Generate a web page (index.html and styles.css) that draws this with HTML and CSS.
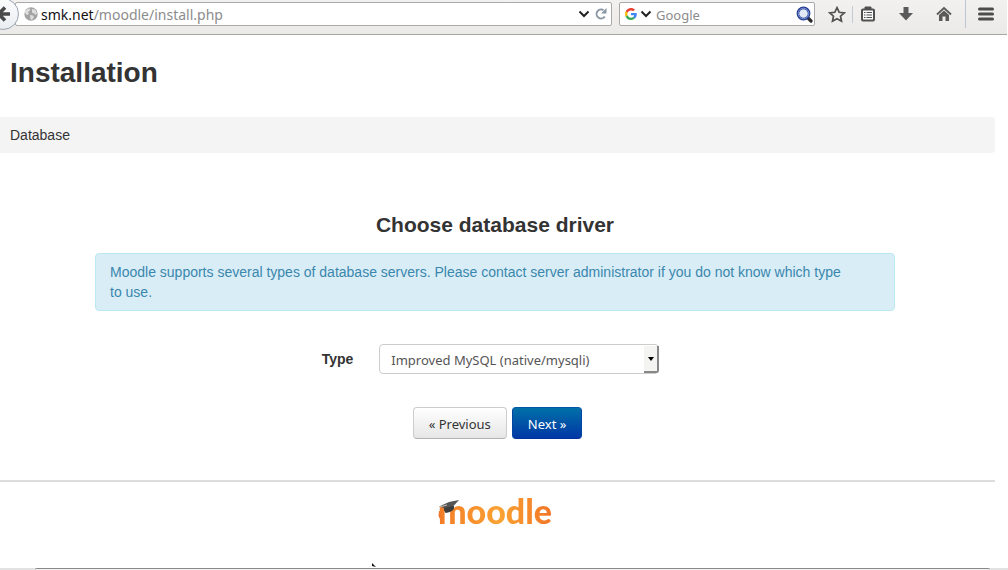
FILE: index.html
```html
<!DOCTYPE html>
<html lang="en">
<head>
  <meta charset="UTF-8">
  <meta name="viewport" content="width=device-width, initial-scale=1.0">
  <title>Installation</title>
  <link rel="stylesheet" href="styles.css">
</head>
<body>
  <header class="toolbar">
    <button class="back" aria-label="Back">
      <svg width="19" height="31" viewBox="0 0 19 31">
        <defs>
          <linearGradient id="backFill" x1="0" y1="0" x2="0" y2="1">
            <stop offset="0" stop-color="#fdfdfd"/>
            <stop offset="1" stop-color="#e9edf2"/>
          </linearGradient>
        </defs>
        <circle cx="3" cy="14" r="15.5" fill="url(#backFill)" stroke="#9aa5b1"/>
        <path d="M10 14H-2M5 7.500L-1.500 14L5 20.500" fill="none" stroke="#4a4a4a" stroke-width="3.600"/>
      </svg>
    </button>
    <div class="url-box">
      <svg class="globe" width="14" height="14" viewBox="0 0 14 14">
        <circle cx="7" cy="7" r="6.700" fill="#a3a3a3"/>
        <path d="M1 4L4 1.500L6.500 2L5.500 4L4 5L5 7L3 8L1 6ZM8 2L11 2.500L13 6L12 8L10 6.500L8 5.500ZM6 8L9 8.500L10 10L8 13L6.500 12Z" fill="#dedede"/>
      </svg>
      <div class="url"><b>smk.net</b>/moodle/install.php</div>
      <button class="plain" aria-label="History">
        <svg width="12" height="8" viewBox="0 0 12 8"><path d="M1.500 1.500L6 6L10.500 1.500" fill="none" stroke="#222" stroke-width="2"/></svg>
      </button>
      <button class="plain reload" aria-label="Reload">
        <svg width="12" height="12" viewBox="0 0 12 12"><path d="M8.500 2.200A4.500 4.500 0 1 0 9.800 8.500" fill="none" stroke="#8996a3" stroke-width="1.900"/><path d="M11.500 0V5.500H6Z" fill="#8996a3"/></svg>
      </button>
    </div>
    <div class="search-box">
      <svg width="12" height="12" viewBox="0 0 48 48">
        <path fill="#ea4335" d="M24 9.500c3.500 0 6.700 1.200 9.200 3.600l6.900-6.900C35.900 2.400 30.500 0 24 0 14.600 0 6.500 5.400 2.600 13.200l8 6.200C12.400 13.700 17.700 9.500 24 9.500z"/>
        <path fill="#4285f4" d="M47 24.500c0-1.600-.2-3.100-.4-4.500H24v9h12.900c-.6 3-2.300 5.500-4.800 7.200l7.700 6C44.400 38 47 32 47 24.500z"/>
        <path fill="#fbbc05" d="M10.500 28.600c-.5-1.500-.8-3-.8-4.600s.3-3.100.8-4.600l-8-6.200C1 16.500 0 20.100 0 24s1 7.500 2.600 10.800z"/>
        <path fill="#34a853" d="M24 48c6.500 0 11.900-2.100 15.900-5.800l-7.700-6c-2.200 1.500-4.900 2.300-8.200 2.300-6.300 0-11.600-4.200-13.500-9.900l-8 6.200C6.500 42.600 14.600 48 24 48z"/>
      </svg>
      <svg class="engine-arrow" width="12" height="8" viewBox="0 0 12 8"><path d="M1.500 1.500L6 6L10.500 1.500" fill="none" stroke="#222" stroke-width="2"/></svg>
      <input class="search" type="text" placeholder="Google" aria-label="Search">
      <button class="plain" aria-label="Search Google">
        <svg width="17" height="17" viewBox="0 0 17 17">
          <path d="M11.500 11.500L15 15" stroke="#292929" stroke-width="3.200" stroke-linecap="round"/>
          <circle cx="7.500" cy="7.500" r="5.600" fill="#e1e9f7" stroke="#263c91" stroke-width="2.600"/>
          <circle cx="7.500" cy="7.500" r="5.300" fill="none" stroke="#7f98da" stroke-width="1"/>
        </svg>
      </button>
    </div>
    <div class="actions">
      <button class="plain bookmark" aria-label="Bookmark this page">
        <svg width="18" height="17" viewBox="0 0 18 17"><path d="M9 1.700L11.200 6.300L16.200 6.900L12.500 10.200L13.500 15.200L9 12.700L4.500 15.200L5.500 10.200L1.800 6.900L6.800 6.300Z" fill="none" stroke="#505050" stroke-width="1.700"/></svg>
      </button>
      <button class="plain bookmarks" aria-label="Bookmarks">
        <svg width="16" height="16" viewBox="0 0 16 16"><path d="M5 3V1H11V3" fill="#505050" stroke="#505050"/><rect x="2" y="3.500" width="12" height="11" rx="1" fill="#fafafa" stroke="#505050" stroke-width="2"/><path d="M4 6.500H5.500M6.500 6.500H12M4 9H5.500M6.500 9H12M4 11.500H5.500M6.500 11.500H12" stroke="#505050" stroke-width="1"/></svg>
      </button>
      <button class="plain" aria-label="Downloads">
        <svg width="16" height="16" viewBox="0 0 16 16"><path d="M5.500 1H10.500V7H15L8 14.500L1 7H5.500Z" fill="#5a5a5a"/></svg>
      </button>
      <button class="plain" aria-label="Home">
        <svg width="16" height="16" viewBox="0 0 16 16"><path d="M1 8.500L8 2L15 8.500" fill="none" stroke="#5a5a5a" stroke-width="1.800"/><path d="M3 9L8 4.500L13 9V15H9.500V10.500H6.500V15H3Z" fill="#5a5a5a"/></svg>
      </button>
      <button class="plain menu" aria-label="Open menu">
        <svg width="16" height="14" viewBox="0 0 16 14"><path d="M1.500 2H14.500M1.500 7H14.500M1.500 12H14.500" stroke="#4c4c4c" stroke-width="3" stroke-linecap="round"/></svg>
      </button>
    </div>
  </header>

  <main class="page">
    <h1>Installation</h1>
    <div class="breadcrumb">Database</div>

    <form class="installer">
      <h2>Choose database driver</h2>
      <div class="alert">Moodle supports several types of database servers. Please contact server administrator if you do not know which type to use.</div>
      <div class="field">
        <label for="dbtype">Type</label>
        <div class="select-wrap">
          <select id="dbtype">
            <option>Improved MySQL (native/mysqli)</option>
          </select>
          <span class="drop"></span>
        </div>
      </div>
      <div class="buttons">
        <button type="button" class="btn">« Previous</button>
        <button type="button" class="btn primary">Next »</button>
      </div>
    </form>

    <footer>
      <a class="logo" href="#">moodle
        <svg class="hat" width="24" height="26" viewBox="0 0 24 26">
          <path d="M6 8L16 6.500V9.500C15 12 11 13.500 7.500 14L6 11Z" fill="#3d3d3d"/>
          <path d="M1 7.500L11 3L21 1L16 6.500L6 9Z" fill="#555"/>
          <path d="M9 6L1.500 8V14" fill="none" stroke="#e7dcd3" stroke-width=".8"/>
          <path d="M1 12L2 12L2.500 21L.5 17Z" fill="#f0742a"/>
        </svg>
      </a>
    </footer>
  </main>

  <div class="scrollbar"><div class="thumb"></div></div>
  <svg class="pointer" width="6" height="6" viewBox="0 0 6 6"><path d="M0 1L4 5L0 4Z" fill="#111"/></svg>
</body>
</html>
```
FILE: styles.css
```css
* {
  box-sizing: border-box;
}
body {
  margin: 0;
  height: 100vh;
  display: flex;
  flex-direction: column;
  overflow: hidden;
  position: relative;
  background: #fff;
  color: #333;
  font-family: "Liberation Sans", Arial, sans-serif;
  font-size: 14px;
  line-height: 20px;
}
button, input, select {
  font-family: "Noto Sans", "Open Sans", sans-serif;
  font-size: 13px;
}

/* browser toolbar */
.toolbar {
  display: flex;
  align-items: flex-start;
  height: 35px;
  flex-shrink: 0;
  margin-right: 1px;
  background: linear-gradient(#f2f1f0, #ebeae8);
  border-bottom: 1px solid #a6a6a3;
  font-family: "Noto Sans", "Open Sans", sans-serif;
}
.back {
  width: 19px;
  height: 31px;
  padding: 0;
  border: none;
  background: none;
  z-index: 1;
}
.back svg, .plain svg {
  display: block;
}
.plain {
  padding: 0;
  border: none;
  background: none;
}
.url-box, .search-box {
  display: flex;
  align-items: center;
  height: 24px;
  margin-top: 2px;
  background: #fff;
  border: 1px solid #aaa;
  border-radius: 2px;
}
.url-box {
  flex: 1;
  margin-left: -4px;
  padding: 0 4px 0 8px;
}
.url {
  flex: 1;
  margin-left: 3px;
  padding-top: 2px;
  color: #8c8c8c;
  font-size: 14px;
}
.url b {
  color: #111;
  font-weight: normal;
}
.reload {
  margin-left: 5px;
}
.search-box {
  width: 196px;
  margin-left: 7px;
  padding: 0 1px 0 5px;
}
.engine-arrow {
  margin-left: 3px;
}
.search {
  flex: 1;
  min-width: 0;
  height: 22px;
  padding: 2px 0 0;
  margin-left: 4px;
  border: none;
  outline: none;
  background: none;
}
.search::placeholder {
  color: #8c8c8c;
}
.actions {
  display: flex;
  align-items: center;
  height: 28px;
  margin-left: 13px;
  gap: 22px;
}
.bookmark {
  width: 25px;
  margin-right: -8px;
  border-right: 1px solid #c3ccd5;
}
.bookmarks {
  margin-left: -7px;
}
.menu {
  height: 28px;
  margin-left: -9px;
  padding: 0 13px 0 12px;
  border-left: 1px solid #bcc6d0;
}

/* page content */
.page {
  flex: 1;
  min-height: 0;
  overflow: hidden;
  margin-right: 1px;
  padding: 18px 12px 0 0;
}
h1 {
  margin: 0 0 24px 10px;
  font-size: 28px;
  line-height: 40px;
}
.breadcrumb {
  padding: 8px 10px;
  background: #f4f4f4;
  border-radius: 0 4px 4px 0;
}
.installer {
  padding: 52px 5px 41px 0;
}
h2 {
  margin: 0 0 8px;
  font-size: 21px;
  line-height: 40px;
  text-align: center;
}
.alert {
  max-width: 800px;
  margin: 0 auto;
  padding: 8px 44px 8px 14px;
  color: #3a87ad;
  background: #d9edf7;
  border: 1px solid #bce8f1;
  border-radius: 4px;
}
.field {
  display: flex;
  align-items: center;
  justify-content: center;
  gap: 26px;
  margin-top: 33px;
  padding-right: 9px;
}
label {
  font-weight: bold;
}
.select-wrap {
  position: relative;
  width: 280px;
}
select {
  display: block;
  width: 100%;
  height: 30px;
  padding: 2px 20px 0 11px;
  appearance: none;
  color: #555;
  background: #fff;
  border: 1px solid #ccc;
  border-radius: 4px;
}
.drop {
  position: absolute;
  top: 2px;
  right: 0;
  width: 15px;
  height: 27px;
  background: #f4f4f2;
  border-right: 2px solid #888;
  border-bottom: 2px solid #888;
  border-radius: 0 0 3px 0;
  pointer-events: none;
}
.drop::after {
  content: "";
  position: absolute;
  top: 11px;
  left: 4px;
  border: 3px solid transparent;
  border-top: 4px solid #000;
}
.buttons {
  display: flex;
  justify-content: center;
  gap: 5px;
  margin-top: 33px;
  padding-left: 5px;
}
.btn {
  height: 32px;
  padding: 2px 15px 0;
  color: #333;
  background: linear-gradient(#fff, #e6e6e6);
  border: 1px solid #ccc;
  border-bottom-color: #b3b3b3;
  border-radius: 4px;
}
.primary {
  color: #fff;
  background: linear-gradient(#0070a8, #0037a5);
  border-color: #0058a5 #0044a5 #003399;
}
footer {
  padding: 9px 5px 0 0;
  border-top: 2px solid #ddd;
  text-align: center;
}
.logo {
  display: inline-block;
  position: relative;
  color: transparent;
  background: linear-gradient(90deg, #f47c27, #faa233 55%, #f27527);
  background-clip: text;
  font-family: Lato, sans-serif;
  font-size: 34px;
  font-weight: 900;
  line-height: 40px;
  text-decoration: none;
}
.hat {
  position: absolute;
  top: 8px;
  left: 0;
}

/* horizontal scrollbar, cut off by the window edge */
.scrollbar {
  height: 2px;
  flex-shrink: 0;
  padding: 0 18px 0 35px;
  background: #e2e2e2;
}
.thumb {
  height: 2px;
  background: #f4f4f4;
  border-top: 1px solid #888;
  border-radius: 2px 2px 0 0;
}
.pointer {
  position: absolute;
  left: 372px;
  bottom: 2px;
}
```
